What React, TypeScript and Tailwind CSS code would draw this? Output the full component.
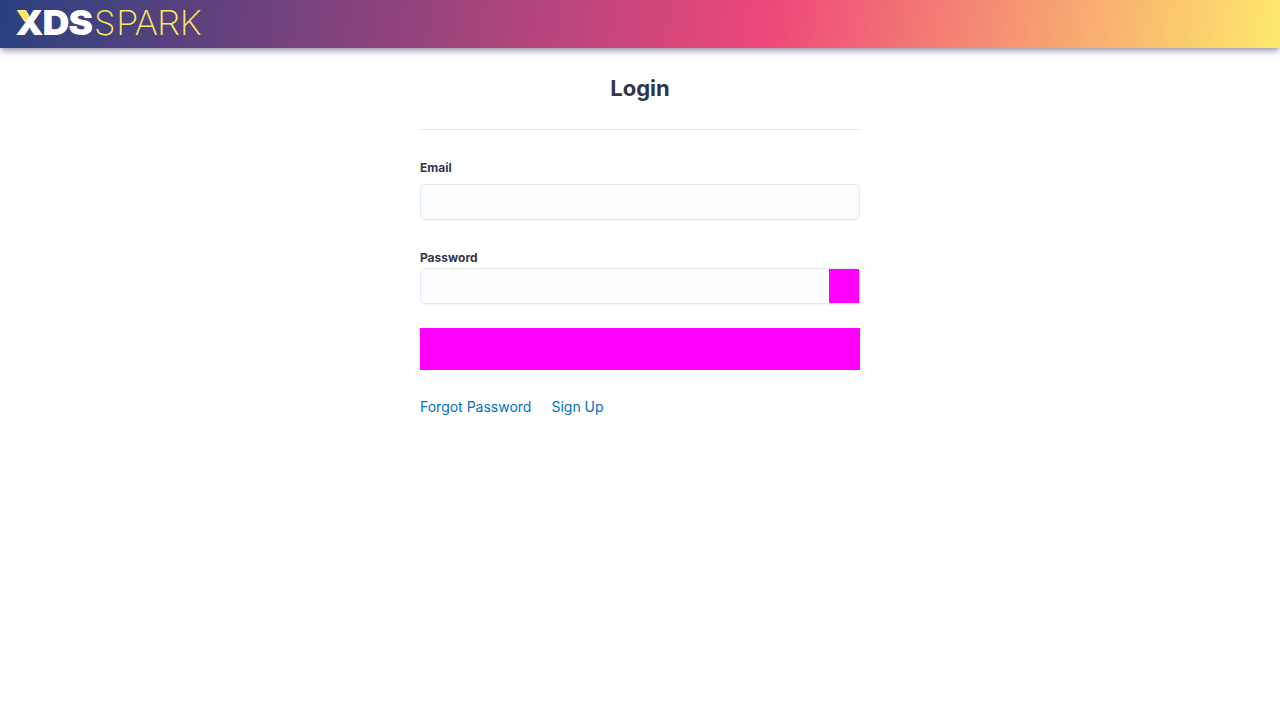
function Logo() {
  return (
    <svg width="200" height="48" viewBox="0 0 200 48" role="img" aria-label="XDS Spark">
      <g fontFamily="Inter, sans-serif" fontSize="34">
        <g fontWeight="900" fill="#fff">
          <text x="-0.5" y="35" textLength="28" lengthAdjust="spacingAndGlyphs">X</text>
          <text x="26.5" y="35" textLength="27" lengthAdjust="spacingAndGlyphs">D</text>
          <text x="52.5" y="35" textLength="24.5" lengthAdjust="spacingAndGlyphs">S</text>
        </g>
        <path d="M0.8 10.2H9.8L13.6 16.3L8.8 22.3Z" fill="#fde764" />
        <g fontWeight="200" fill="#fde764">
          <text x="78" y="35" textLength="21.5" lengthAdjust="spacingAndGlyphs">S</text>
          <text x="100" y="35" textLength="22.5" lengthAdjust="spacingAndGlyphs">P</text>
          <text x="118.5" y="35" textLength="23.5" lengthAdjust="spacingAndGlyphs">A</text>
          <text x="140.8" y="35" textLength="23.5" lengthAdjust="spacingAndGlyphs">R</text>
          <text x="163.8" y="35" textLength="22" lengthAdjust="spacingAndGlyphs">K</text>
        </g>
      </g>
    </svg>
  );
}

function Field({ id, label, type, className }: { id: string; label: string; type: string; className: string }) {
  return (
    <div className={`flex flex-col ${className}`}>
      <label htmlFor={id} className="text-xs leading-4 font-bold text-[#333645]">{label}</label>
      <div className="flex h-9 rounded-[6px] border border-[#e2e8f0] bg-[#fbfdff] shadow-[0_1px_2px_rgba(0,0,0,0.05)]">
        <input id={id} type={type} className="min-w-0 flex-1 bg-transparent px-3 text-sm outline-none" />
        {type === "password" && <button type="button" aria-label="Show password" className="w-[30px] bg-[#ff00ff]" />}
      </div>
    </div>
  );
}

export default function App() {
  return (
    <div className="min-h-screen bg-white font-['Inter',sans-serif] text-[#333447]">
      <header className="flex h-12 items-start bg-[linear-gradient(100deg,#2a4080,#ee4779_60%,#fdea6b)] pl-4 shadow-[0_4px_6px_-1px_rgba(45,55,90,0.5)]">
        <Logo />
      </header>
      <main className="mx-auto w-[440px]">
        <h1 className="pt-6 text-center text-[22px] leading-8 font-bold">Login</h1>
        <hr className="mt-[25px] border-[#e2e8f0]" />
        <form>
          <Field id="email" label="Email" type="email" className="mt-[30px] gap-2" />
          <Field id="password" label="Password" type="password" className="mt-[30px] gap-[2px]" />
          <button type="button" aria-label="Log in" className="mt-6 block h-[42px] w-full bg-[#ff00ff]" />
        </form>
        <nav className="mt-[27px] flex gap-5 text-sm leading-5 text-[#0071bd]">
          <a href="#forgot">Forgot Password</a>
          <a href="#signup">Sign Up</a>
        </nav>
      </main>
    </div>
  );
}
